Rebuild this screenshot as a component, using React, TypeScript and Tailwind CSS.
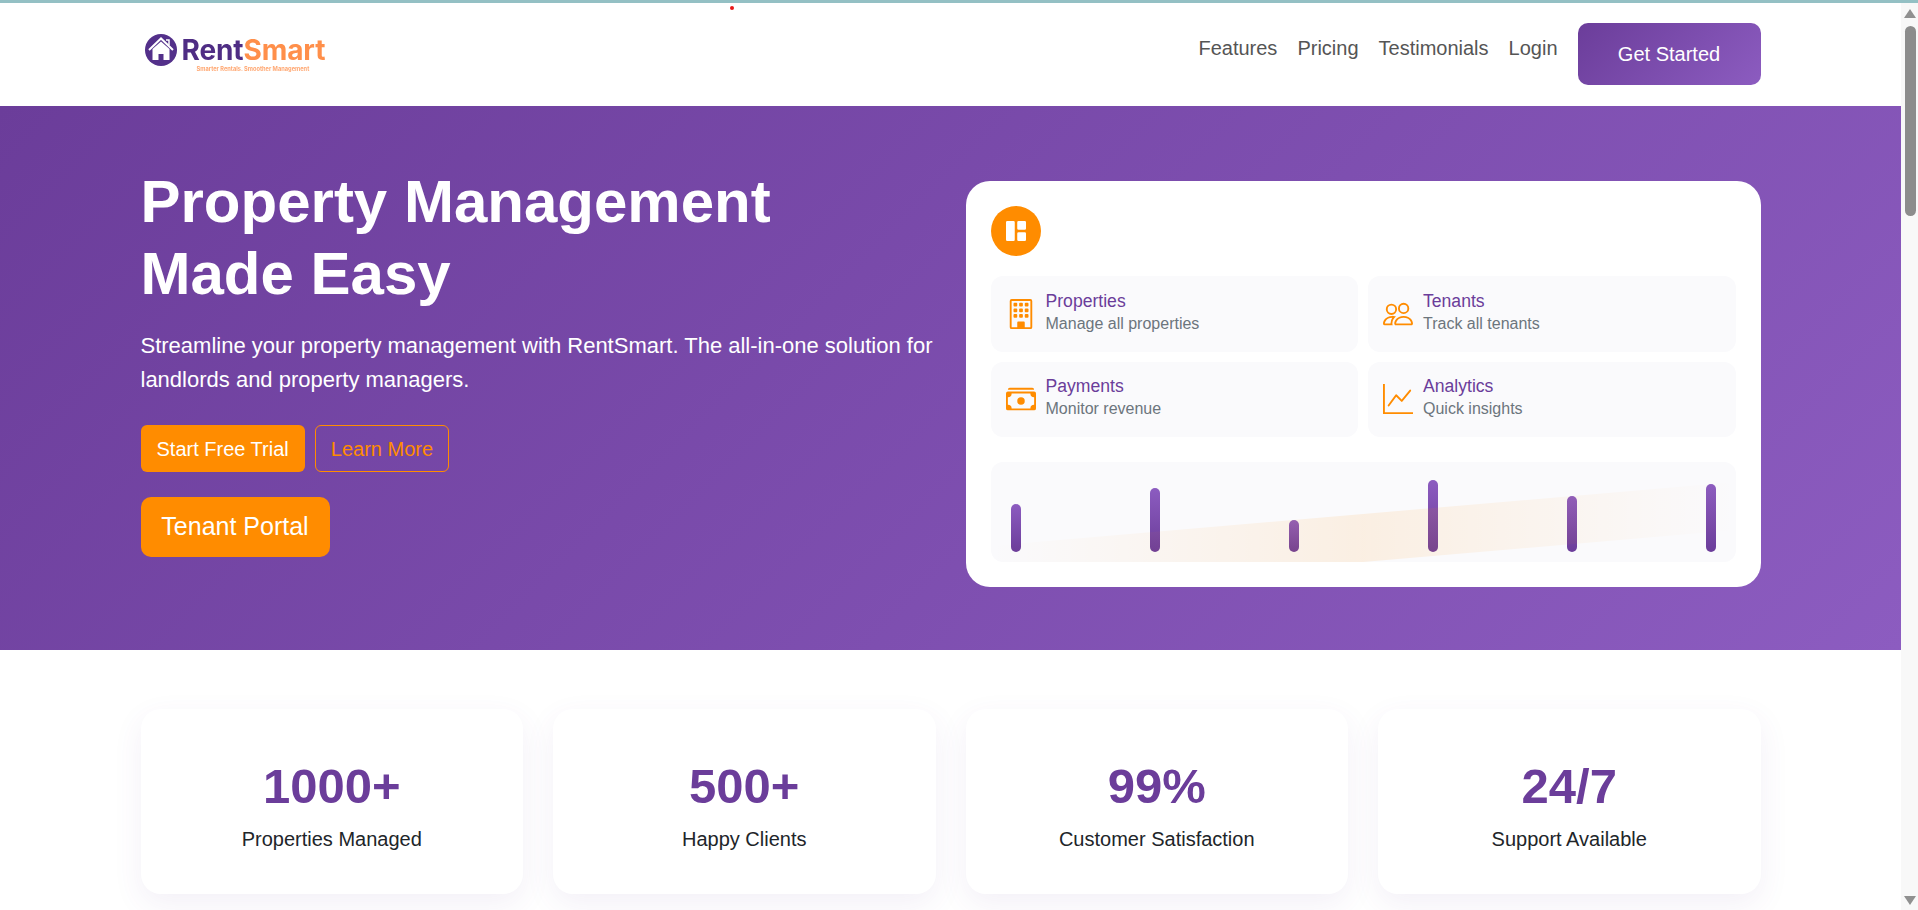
import { BsBuilding, BsCashStack, BsGraphUp, BsGrid1X2Fill, BsPeople } from "react-icons/bs";

const features = [
    { icon: BsBuilding, title: "Properties", text: "Manage all properties" },
    { icon: BsPeople, title: "Tenants", text: "Track all tenants" },
    { icon: BsCashStack, title: "Payments", text: "Monitor revenue" },
    { icon: BsGraphUp, title: "Analytics", text: "Quick insights" },
];

const bars = [48, 64, 32, 72, 56, 68];

const stats = [
    { value: "1000+", label: "Properties Managed" },
    { value: "500+", label: "Happy Clients" },
    { value: "99%", label: "Customer Satisfaction" },
    { value: "24/7", label: "Support Available" },
];

const Logo = () => (
    <div className="flex flex-col blur-[0.4px] mt-[-2px]">
        <div className="flex items-center gap-[5px] ml-[4px]">
            <svg width="32" height="32" viewBox="0 0 32 32">
                <circle cx="16" cy="16" r="16" fill="#53308a" />
                <path d="M4 16 L16 4.5 L28 16" fill="none" stroke="#fff" strokeWidth="2" />
                <path d="M7.5 15 V26 H24.5 V15 L16 7.5 Z" fill="#fff" />
                <rect x="13.5" y="20" width="5" height="6" fill="#53308a" />
                <path d="M21 6 h3 v5" fill="none" stroke="#fff" strokeWidth="1.5" />
            </svg>
            <span className="text-[28px] leading-[32px] font-bold tracking-[-0.1px] font-['Inter',sans-serif] text-[#4f2d84]">
                Rent<span className="text-[#ff8f4a]">Smart</span>
            </span>
        </div>
        <span className="ml-[56px] mt-[-1px] text-[5.7px] leading-[8px] font-bold font-['Inter',sans-serif] text-[#ffa873]">
            Smarter Rentals. Smoother Management
        </span>
    </div>
);

const Scrollbar = () => (
    <div className="w-[17px] bg-[#f8f8f8] flex flex-col items-center justify-between pl-[1px] pt-[6px] pb-[5px]">
        <div className="flex flex-col items-center gap-[8px]">
            <svg width="12" height="9" viewBox="0 0 12 9">
                <polygon points="6,0 12,9 0,9" fill="#909090" />
            </svg>
            <div className="w-[11px] h-[190px] rounded-full bg-[#8c8c8c]" />
        </div>
        <svg width="12" height="9" viewBox="0 0 12 9">
            <polygon points="0,0 12,0 6,9" fill="#909090" />
        </svg>
    </div>
);

export default function App() {
    return (
        <div className="relative h-[910px] w-[1918px] overflow-hidden flex flex-col bg-white font-['Liberation_Sans',Arial,sans-serif]">
            <div className="h-[3px] bg-[#94c0c4] shrink-0" />
            <div className="absolute left-[730px] top-[6px] w-[4px] h-[4px] rounded-full bg-[#e81818]" />
            <div className="flex flex-1 min-h-0">
                <main className="flex-1 min-w-0">
                    <nav className="h-[103px] bg-white">
                        <div className="mx-auto w-[1620px] h-full flex items-center justify-between">
                            <Logo />
                            <div className="flex items-center gap-[20px] mb-[2px]">
                                <div className="flex items-center gap-[20px] pb-[11px] text-[20px] text-[#555555]">
                                    <span>Features</span>
                                    <span>Pricing</span>
                                    <span>Testimonials</span>
                                    <span>Login</span>
                                </div>
                                <div className="w-[183px] h-[62px] rounded-[10px] flex items-center justify-center text-[20px] text-white bg-[linear-gradient(135deg,#6b3d9a,#8c5cc0)]">
                                    Get Started
                                </div>
                            </div>
                        </div>
                    </nav>

                    <section className="pt-[60px] pb-[63px] bg-[linear-gradient(135deg,#6b3d9a,#8c5cc0)]">
                        <div className="mx-auto w-[1620px] grid grid-cols-2 gap-[30px]">
                            <div>
                                <h1 className="text-[60px] leading-[72px] font-bold text-white">
                                    Property Management
                                    <br />
                                    Made Easy
                                </h1>
                                <p className="mt-[19px] text-[22px] leading-[33.6px] text-white">
                                    Streamline your property management with RentSmart. The all-in-one solution for landlords and property managers.
                                </p>
                                <div className="mt-[29px] flex gap-[10px]">
                                    <div className="h-[47px] px-[16px] rounded-[6px] flex items-center text-[20px] text-white bg-[#ff8c00]">
                                        Start Free Trial
                                    </div>
                                    <div className="h-[47px] px-[15px] rounded-[6px] border border-[#ff8c00] flex items-center text-[20px] text-[#ff8c00]">
                                        Learn More
                                    </div>
                                </div>
                                <div className="mt-[25px] w-[189px] h-[60px] rounded-[10px] flex items-center justify-center text-[25px] text-white bg-[#ff8c00]">
                                    Tenant Portal
                                </div>
                            </div>

                            <div className="mt-[15px] h-[406px] rounded-[24px] bg-white p-[25px]">
                                <div className="w-[50px] h-[50px] rounded-full bg-[#ff8c00] flex items-center justify-center text-white">
                                    <BsGrid1X2Fill size={20} />
                                </div>
                                <div className="mt-[20px] grid grid-cols-2 gap-[10px]">
                                    {features.map((f) => (
                                        <div key={f.title} className="h-[75.5px] rounded-[12px] bg-[#fafafc] pl-[15px] flex items-center gap-[10px]">
                                            <f.icon size={30} className="text-[#ff8c00] shrink-0" />
                                            <div className="mb-[3px]">
                                                <div className="text-[17.6px] leading-[22px] text-[#6b3d9a]">{f.title}</div>
                                                <div className="text-[16px] leading-[23px] text-[#6c757d]">{f.text}</div>
                                            </div>
                                        </div>
                                    ))}
                                </div>
                                <div className="relative mt-[25px] h-[100px] rounded-[12px] bg-[#fafafc] overflow-hidden px-[20px] pb-[10px] flex items-end justify-between">
                                    {bars.map((h, i) => (
                                        <div
                                            key={i}
                                            className="w-[10px] rounded-[5px] bg-[linear-gradient(0deg,#6b3d9a,#8c5cc0)]"
                                            style={{ height: h }}
                                        />
                                    ))}
                                    <div className="absolute inset-x-0 bottom-0 h-[80px] bg-[linear-gradient(90deg,transparent,rgba(255,140,0,0.1),transparent)] [clip-path:polygon(0_80%,100%_0,100%_60%,50%_100%,0_100%)]" />
                                </div>
                            </div>
                        </div>
                    </section>

                    <section className="pt-[59px]">
                        <div className="mx-auto w-[1620px] grid grid-cols-4 gap-[30px]">
                            {stats.map((s) => (
                                <div key={s.label} className="h-[185px] rounded-[20px] bg-white px-[40px] pt-[41px] text-center shadow-[0_10px_30px_rgba(107,61,154,0.08)]">
                                    <div className="text-[49px] leading-[72px] font-bold text-[#6b3d9a]">{s.value}</div>
                                    <div className="mt-[2px] text-[20px] leading-[30px] text-[#212529]">{s.label}</div>
                                </div>
                            ))}
                        </div>
                    </section>
                </main>
                <Scrollbar />
            </div>
        </div>
    );
}
